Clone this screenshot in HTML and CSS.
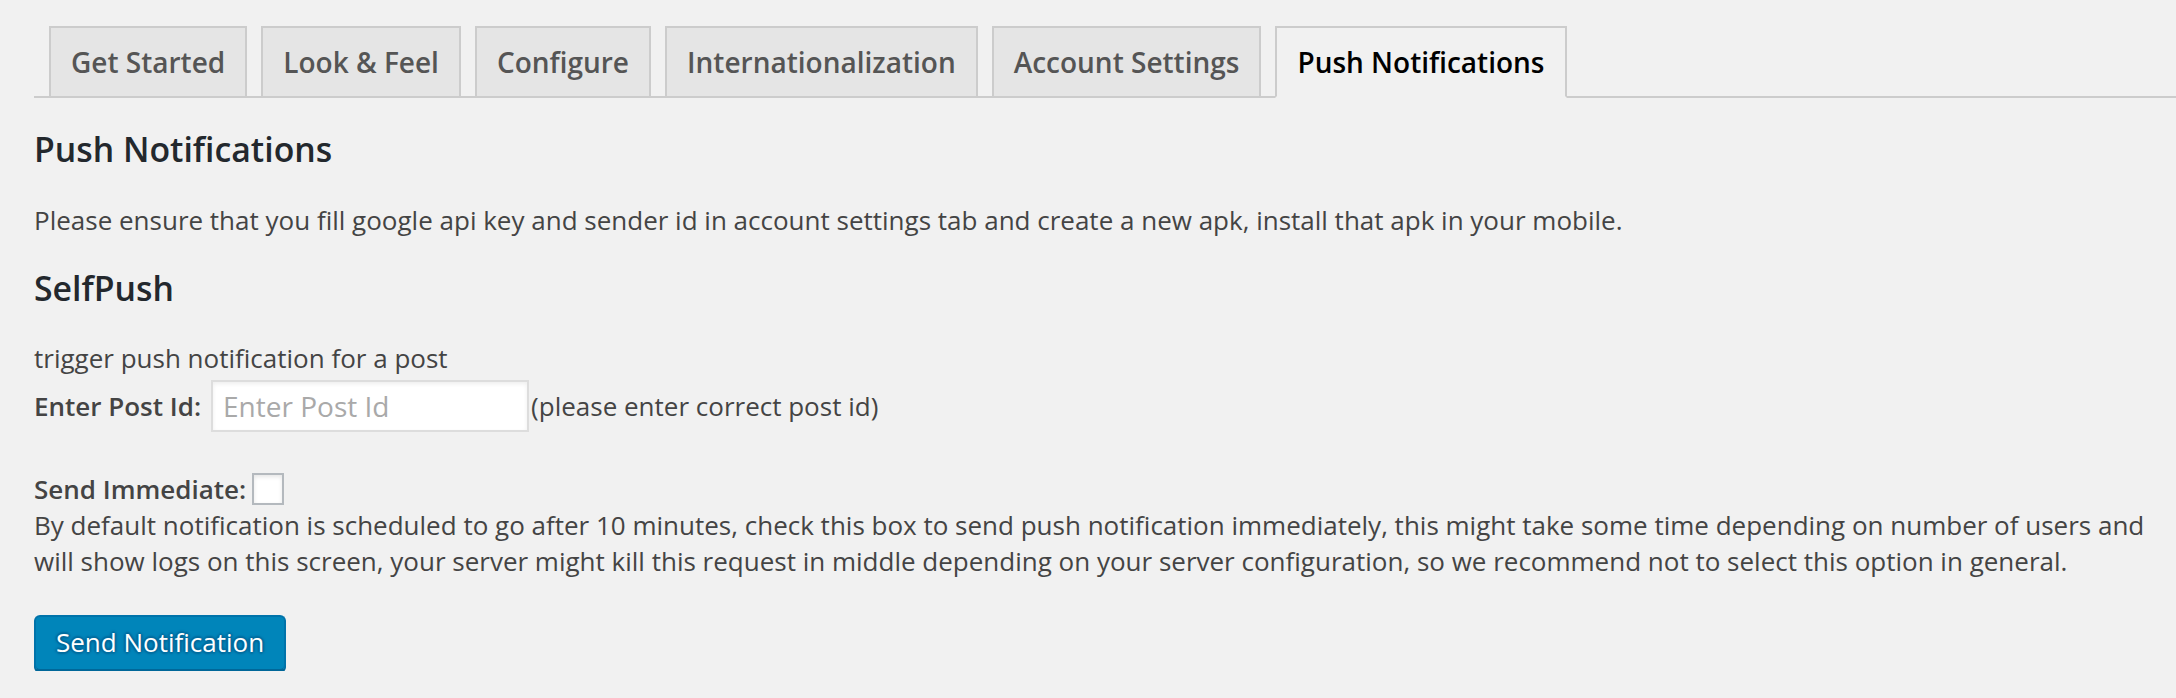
FILE: index.html
```html
<!DOCTYPE html>
<html lang="en">
<head>
    <meta charset="UTF-8">
    <title>Push Notifications</title>
    <link rel="stylesheet" href="styles.css">
</head>
<body>
    <div class="wrap">
        <nav class="nav-tab-wrapper">
            <a class="nav-tab" href="#">Get Started</a>
            <a class="nav-tab" href="#">Look &amp; Feel</a>
            <a class="nav-tab" href="#">Configure</a>
            <a class="nav-tab" href="#">Internationalization</a>
            <a class="nav-tab" href="#">Account Settings</a>
            <a class="nav-tab nav-tab-active" href="#">Push Notifications</a>
        </nav>

        <h2 class="section-title first">Push Notifications</h2>
        <p class="intro">Please ensure that you fill google api key and sender id in account settings tab and create a new apk, install that apk in your mobile.</p>

        <h2 class="section-title">SelfPush</h2>
        <form class="push-form" onsubmit="return false;">
            <div class="hint">trigger push notification for a post</div>
            <div class="field-row post-row">
                <label for="post-id">Enter Post Id:</label>
                <input type="text" id="post-id" class="post-input" placeholder="Enter Post Id">
                <span class="field-note">(please enter correct post id)</span>
            </div>
            <div class="field-row immediate-row">
                <label for="send-now">Send Immediate:</label>
                <input type="checkbox" id="send-now" class="check">
            </div>
            <p class="description">By default notification is scheduled to go after 10 minutes, check this box to send push notification immediately, this might take some time depending on number of users and will show logs on this screen, your server might kill this request in middle depending on your server configuration, so we recommend not to select this option in general.</p>
            <button type="submit" class="button-primary">Send Notification</button>
        </form>
    </div>
</body>
</html>
```

FILE: styles.css
```css
body {
    margin: 0;
    background: #f1f1f1;
    color: #444;
    font-family: "Open Sans", "Noto Sans", sans-serif;
    font-size: 26px;
    line-height: 36px;
}
.wrap {
    padding-left: 34px;
}

/* tabs */
.nav-tab-wrapper {
    display: flex;
    align-items: flex-end;
    padding-top: 26px;
    border-bottom: 2px solid #ccc;
}
.nav-tab {
    display: block;
    margin-left: 14px;
    padding: 10px 20px;
    border: 2px solid #ccc;
    border-bottom: none;
    background: #e5e5e5;
    color: #555;
    font-size: 28px;
    line-height: 48px;
    font-weight: 600;
    text-decoration: none;
    white-space: nowrap;
}
.nav-tab:first-child {
    margin-left: 15px;
}
.nav-tab-active {
    margin-bottom: -2px;
    border-bottom: 2px solid #f1f1f1;
    background: #f1f1f1;
    color: #000;
}

.section-title {
    margin: 29px 0 0;
    color: #23282d;
    font-size: 33.8px;
    line-height: 44px;
    font-weight: 600;
}
.intro {
    margin: 30px 0 26px;
    line-height: 39px;
}
.intro + .section-title {
    margin-top: 26px;
}

.hint {
    margin-top: 30px;
}
.field-row {
    display: flex;
    align-items: center;
}
.field-row label {
    font-weight: 600;
}
.post-row {
    margin-top: 4px;
}
.post-input {
    box-sizing: border-box;
    width: 318px;
    height: 52px;
    margin: 0 2px 0 10px;
    padding: 0 10px;
    border: 2px solid #ddd;
    box-shadow: inset 0 2px 4px rgba(0, 0, 0, 0.07);
    background: #fff;
    color: #32373c;
    font-family: inherit;
    font-size: 28px;
    outline: none;
}
.post-input::placeholder {
    color: #a9a9a9;
}
.immediate-row {
    margin-top: 39px;
}
.check {
    -webkit-appearance: none;
    appearance: none;
    box-sizing: border-box;
    width: 32px;
    height: 32px;
    margin: 0 0 0 6px;
    border: 2px solid #b4b9be;
    background: #fff;
    box-shadow: inset 0 2px 4px rgba(0, 0, 0, 0.1);
}
.check:checked {
    background: #fff url("data:image/svg+xml,%3Csvg xmlns='http://www.w3.org/2000/svg' viewBox='0 0 20 20'%3E%3Cpath d='M4 10l4 4 8-9' fill='none' stroke='%231e8cbe' stroke-width='3'/%3E%3C/svg%3E") center/24px no-repeat;
}
.description {
    margin: 0;
}

.button-primary {
    display: block;
    height: 56px;
    margin-top: 36px;
    padding: 0 20px 2px;
    border: 2px solid #0073aa;
    border-bottom-color: #006799;
    border-radius: 6px;
    background: #0085ba;
    box-shadow: 0 2px 0 #006799;
    color: #fff;
    font-family: inherit;
    font-size: 26px;
    line-height: 50px;
    text-shadow: 0 -2px 2px #006799, 2px 0 2px #006799, 0 2px 2px #006799, -2px 0 2px #006799;
    cursor: pointer;
}
```
